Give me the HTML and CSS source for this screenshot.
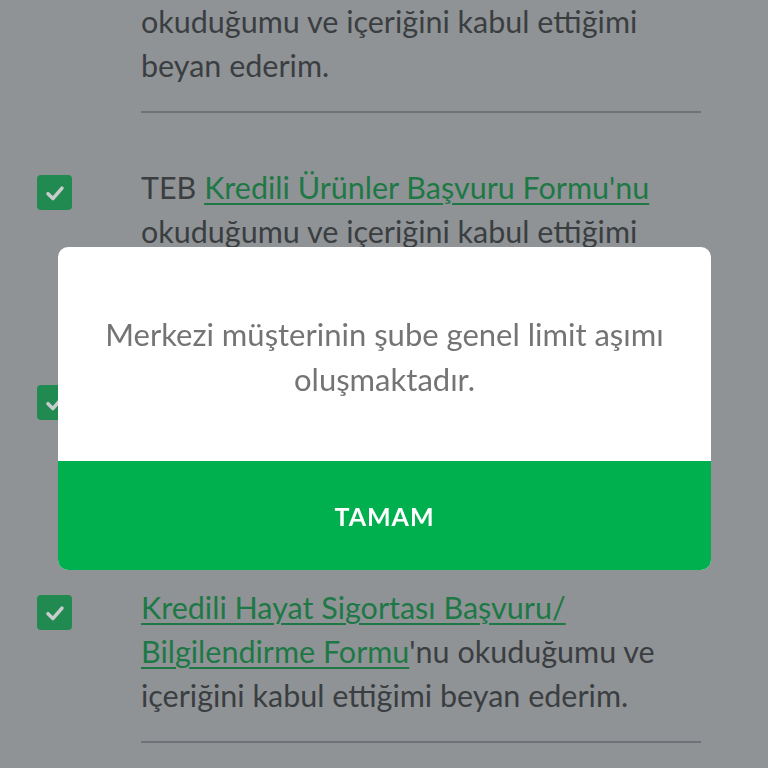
FILE: index.html
```html
<!DOCTYPE html>
<html lang="tr">
<head>
    <meta charset="UTF-8">
    <meta name="viewport" content="width=device-width, initial-scale=1.0">
    <title>Onaylar</title>
    <link rel="stylesheet" href="styles.css">
</head>
<body>
    <div id="consents">
        <div class="consent">
            <span class="check"><svg viewBox="0 0 20 20"><polyline points="5,10.5 8.5,14 15,6.5"/></svg></span>
            <div class="consent-text">
                TEB <a href="#">Ön Bilgilendirme Formu'nu</a><br>
                okuduğumu ve içeriğini kabul ettiğimi<br>
                beyan ederim.
            </div>
        </div>
        <div class="consent">
            <span class="check"><svg viewBox="0 0 20 20"><polyline points="5,10.5 8.5,14 15,6.5"/></svg></span>
            <div class="consent-text">
                TEB <a href="#">Kredili Ürünler Başvuru Formu'nu</a><br>
                okuduğumu ve içeriğini kabul ettiğimi<br>
                beyan ederim.
            </div>
        </div>
        <div class="consent">
            <span class="check"><svg viewBox="0 0 20 20"><polyline points="5,10.5 8.5,14 15,6.5"/></svg></span>
            <div class="consent-text">
                TEB <a href="#">Kredi Sözleşmesi'ni</a><br>
                okuduğumu ve içeriğini kabul ettiğimi<br>
                beyan ederim.
            </div>
        </div>
        <div class="consent">
            <span class="check"><svg viewBox="0 0 20 20"><polyline points="5,10.5 8.5,14 15,6.5"/></svg></span>
            <div class="consent-text">
                <a href="#">Kredili Hayat Sigortası Başvuru/</a><br>
                <a href="#">Bilgilendirme Formu</a>'nu okuduğumu ve<br>
                içeriğini kabul ettiğimi beyan ederim.
            </div>
        </div>
    </div>

    <div id="overlay">
        <div class="dialog">
            <p class="dialog-message">Merkezi müşterinin şube genel limit aşımı<br>oluşmaktadır.</p>
            <button class="dialog-button">TAMAM</button>
        </div>
    </div>
</body>
</html>
```

FILE: styles.css
```css
html, body {
    height: 100%;
}
body {
    margin: 0;
    background: #8f9396;
    font-family: Lato, 'Noto Sans', sans-serif;
    color: #3b3e41;
    overflow: hidden;
}
#consents {
    margin-top: -97px;
    padding-left: 37px;
}
.consent {
    display: flex;
    align-items: flex-start;
}
.check {
    flex: none;
    width: 35px;
    height: 35px;
    margin-top: 62px;
    margin-right: 69px;
    background: #218a50;
    border-radius: 4px;
    display: flex;
    align-items: center;
    justify-content: center;
}
.check svg {
    width: 28px;
    height: 28px;
    fill: none;
    stroke: #c9cccd;
    stroke-width: 2.5;
    stroke-linecap: round;
    stroke-linejoin: round;
}
.consent-text {
    width: 560px;
    padding: 52px 0 24px;
    border-bottom: 2px solid #6f7377;
    font-size: 30.5px;
    line-height: 44px;
    white-space: nowrap;
}
.consent-text a {
    color: #1e7845;
    text-decoration: underline;
    text-decoration-thickness: 2px;
    text-underline-offset: 4px;
}
#overlay {
    position: fixed;
    inset: 0;
    display: flex;
    justify-content: center;
    align-items: flex-start;
    padding-top: 247px;
}
.dialog {
    width: 653px;
    margin-left: 1px;
    background: #fff;
    border-radius: 10px;
    overflow: hidden;
}
.dialog-message {
    margin: 0;
    height: 214px;
    box-sizing: border-box;
    padding: 65px 30px 0;
    text-align: center;
    font-size: 31px;
    line-height: 45px;
    color: #747474;
}
.dialog-button {
    display: block;
    width: 100%;
    height: 109px;
    border: none;
    background: #00af4e;
    color: #fff;
    font-family: Lato, 'Noto Sans', sans-serif;
    font-weight: bold;
    font-size: 25px;
    letter-spacing: 1px;
    cursor: pointer;
}
```
